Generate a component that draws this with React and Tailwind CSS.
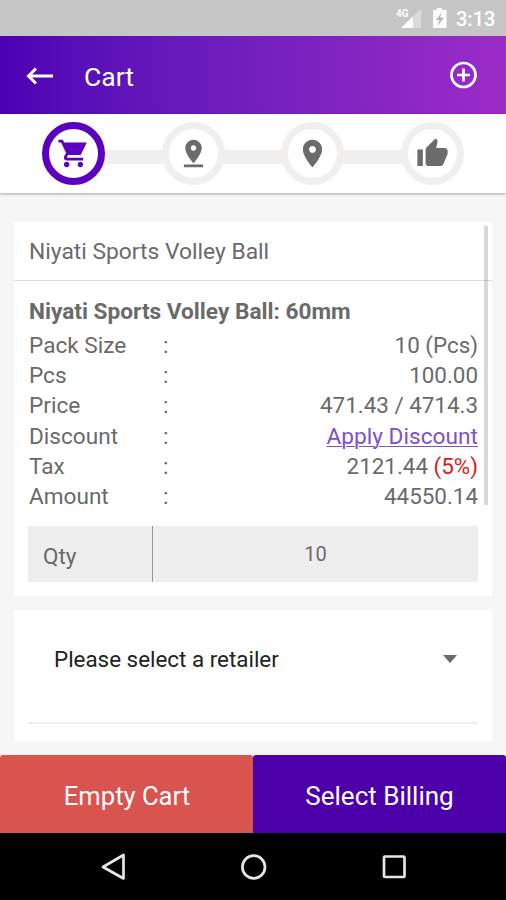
const paths = {
  cart: "M7 18c-1.1 0-1.99.9-1.99 2S5.9 22 7 22s2-.9 2-2-.9-2-2-2zM1 2v2h2l3.6 7.59-1.35 2.45c-.16.28-.25.61-.25.96 0 1.1.9 2 2 2h12v-2H7.42c-.14 0-.25-.11-.25-.25l.03-.12.9-1.63h9.1L21.700 4H5.210l-.94-2H1zm16 16c-1.1 0-1.99.9-1.99 2s.89 2 1.99 2 2-.9 2-2-.9-2-2-2z",
  drop: "M18 8c0-3.31-2.69-6-6-6S6 4.69 6 8c0 4.5 6 11 6 11s6-6.5 6-11zm-8 0c0-1.1.9-2 2-2s2 .9 2 2-.89 2-2 2c-1.1 0-2-.9-2-2zM5 20v2h14v-2H5z",
  place: "M12 2C8.13 2 5 5.13 5 9c0 5.25 7 13 7 13s7-7.75 7-13c0-3.87-3.13-7-7-7zm0 9.5c-1.38 0-2.5-1.12-2.5-2.5s1.12-2.5 2.5-2.5 2.5 1.12 2.5 2.5-1.12 2.5-2.5 2.5z",
  thumb: "M1 21h4V9H1v12zm22-11c0-1.1-.9-2-2-2h-6.31l.95-4.57.03-.32c0-.41-.17-.79-.44-1.06L14.17 1 7.59 7.59C7.22 7.95 7 8.45 7 9v10c0 1.1.9 2 2 2h9c.83 0 1.54-.5 1.84-1.22l3.02-7.05c.09-.23.14-.47.14-.73v-2z",
};

const rows = [
  ["Pack Size", "10 (Pcs)"],
  ["Pcs", "100.00"],
  ["Price", "471.43 / 4714.3"],
  ["Discount", <span className="text-[22.700px] text-[#8050c8] underline decoration-1 underline-offset-2">Apply Discount</span>],
  ["Tax", <>2121.44 <span className="text-[#d51c1c]">(5%)</span></>],
  ["Amount", "44550.14"],
];

function Step({ icon, active }) {
  return (
    <div className={`z-10 flex size-[63px] shrink-0 items-center justify-center rounded-full bg-white ${active ? "border-[7px] border-[#5b00c0] text-[#5b00c0]" : "border-[7px] border-[#f1eeee] text-[#6b6b6b]"}`}>
      <svg viewBox="0 0 24 24" className="size-[33px] shrink-0 fill-current"><path d={paths[icon]} /></svg>
    </div>
  );
}

const Line = () => <div className="-mx-1 mt-[7px] h-[14px] flex-1 bg-[#f1eeee]" />;

export default function App() {
  return (
    <div className="flex h-[900px] w-[506px] flex-col overflow-hidden bg-[#f6f6f6] font-['Roboto',sans-serif] text-[#6a6a6a]">
      <div className="flex h-9 shrink-0 items-center justify-end bg-[#c6c6c6] pr-[10px] text-white">
        <svg viewBox="0 0 54 36" className="h-9 w-[54px]">
          <path d="M5 28L25 9V28Z" fill="#fff" opacity=".35" />
          <path d="M5 28L17 16.500V28Z" fill="#fff" />
          <path d="M0 7h14v10H0z" fill="#c6c6c6" />
          <text x="0" y="17" fontSize="11" fontWeight="700" fill="#fff" fontFamily="Roboto" textLength="12.500" lengthAdjust="spacingAndGlyphs">4G</text>
          <path d="M41 8h5v2h4.500v18H37V10h4z" fill="#fff" />
          <path d="M46 12l-6 8h3.500l-2 6 6.500-8.500h-4z" fill="#b5b5b5" />
        </svg>
        <span className="ml-[6px] w-10 pt-px text-[20px] font-medium leading-9">3:13</span>
      </div>

      <header className="flex h-[78px] shrink-0 items-center bg-linear-to-r from-[#4d00b4] to-[#9c2bc7] pl-[26px] pr-[29px] text-white">
        <svg viewBox="0 0 28 20" className="mt-px h-5 w-7 fill-none stroke-white stroke-[3]"><path d="M27 10H3M10 2.500L2.500 10L10 17.500" /></svg>
        <h1 className="ml-[30px] flex-1 pt-[3px] text-[26.500px] leading-8">Cart</h1>
        <svg viewBox="0 0 28 28" className="size-7 fill-none stroke-white stroke-[2.7]"><circle cx="14.500" cy="14" r="12" /><path d="M14.500 7.500v13M8 14h13" /></svg>
      </header>

      <div className="z-10 flex h-[79px] shrink-0 items-center bg-white pb-px pl-[42px] pr-[42px] shadow-[0_1px_3px_rgba(0,0,0,0.35)]">
        <Step icon="cart" active /><Line /><Step icon="drop" /><Line /><Step icon="place" /><Line /><Step icon="thumb" />
      </div>

      <main className="relative mx-[14px] mt-[29px] h-[374px] shrink-0 bg-white">
        <div className="h-[59px] border-b border-[#dedede] pl-[15px] text-[22.800px] leading-[60px]">Niyati Sports Volley Ball</div>
        <div className="px-[14px] pl-[15px] pt-[14px]">
          <h2 className="h-[35.500px] text-[22.650px] font-bold leading-[34px]">Niyati Sports Volley Ball: 60mm</h2>
          {rows.map(([label, value]) => (
            <div key={label} className="flex h-[30.4px] text-[22.400px] leading-[29.600px]">
              <span className="w-[134px] text-[22.600px] leading-[30.4px]">{label}</span><span>:</span><span className="ml-auto">{value}</span>
            </div>
          ))}
        </div>
        <div className="ml-[14px] mr-[14px] mt-[13.500px] flex h-14 bg-[#eee]">
          <div className="w-[125px] border-r border-[#999] pl-[15px] text-[22.500px] leading-[60px]">Qty</div>
          <div className="flex-1 text-center text-[20px] leading-[57px]">10</div>
        </div>
        <div className="absolute right-1 top-1 h-[279px] w-1 bg-black/15" />
      </main>

      <section className="mx-[14px] mt-[14px] h-[131px] shrink-0 bg-white px-[14px]">
        <div className="flex h-[114px] items-center justify-between border-b-2 border-[#eee] pb-[12px] pl-[26px] pr-[21px] text-[22.400px] text-[#222]">
          <span>Please select a retailer</span>
          <svg viewBox="0 0 14 8" className="-mt-[3px] h-2 w-[14px] fill-[#6a6a6a]"><path d="M0 0H14L7 8Z" /></svg>
        </div>
      </section>

      <div className="mt-auto flex h-[78px] shrink-0 text-[26px] text-white">
        <button className="w-[253px] rounded-t-[3px] bg-[#d9534f] pl-px pt-[5px] text-[25.600px]">Empty Cart</button>
        <button className="w-[253px] rounded-t-[3px] bg-[#4d00aa] pt-[5px]">Select Billing</button>
      </div>
      <nav className="flex h-[67px] shrink-0 items-center justify-center bg-black">
        <svg viewBox="0 0 506 67" className="h-[67px] w-[506px] fill-none stroke-[#e6e6e6] stroke-[2.7]">
          <path d="M103 34L123.500 22V45.500Z" strokeLinejoin="round" /><circle cx="253.700" cy="34" r="11.300" /><rect x="384" y="23.500" width="20.500" height="20.500" rx="1" />
        </svg>
      </nav>
    </div>
  );
}
